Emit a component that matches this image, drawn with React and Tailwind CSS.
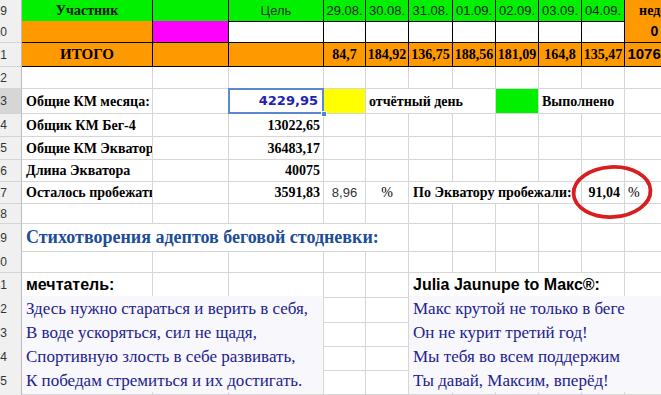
import React from "react";

const COLS =
  "grid grid-cols-[22px_131px_76px_95px_42px_43px_44px_43px_43px_43px_43px_60px]";

const serifB = "font-['Liberation_Serif',serif] font-bold";
const serif = "font-['Liberation_Serif',serif]";
const sans = "font-['Liberation_Sans',Arial,sans-serif]";
const dejaB = "font-['DejaVu_Sans',sans-serif] font-bold";

const dates = ["29.08.", "30.08.", "31.08.", "01.09.", "02.09.", "03.09.", "04.09."];
const totals = ["84,7", "184,92", "136,75", "188,56", "181,09", "164,8", "135,47"];

const summary = [
  { n: "24", h: "h-[23px]", label: "Общик КМ Бег-4", value: "13022,65" },
  { n: "25", h: "h-[23px]", label: "Общие КМ Экватора", value: "36483,17" },
  { n: "26", h: "h-[22px]", label: "Длина Экватора", value: "40075" },
];

const poem = [
  ["Здесь нужно стараться и верить в себя,", "Макс крутой не только в беге"],
  ["В воде ускоряться, сил не щадя,", "Он не курит третий год!"],
  ["Спортивную злость в себе развивать,", "Мы тебя во всем поддержим"],
  ["К победам стремиться и их достигать.", "Ты давай, Максим, вперёд!"],
];

const Row = ({ n, h, active, children }) => (
  <div className={`${COLS} ${h}`}>
    <div
      className={`flex items-center justify-end overflow-hidden border-r border-b border-r-[#bcbcbc] border-b-[#d4d4d4] pr-[14px] text-[12px] text-[#333] ${
        active ? "bg-[#d6d6d6]" : "bg-[#f0f0f0]"
      }`}
    >
      {n}
    </div>
    {children}
  </div>
);

const Cell = ({ dark, className = "", children }) => (
  <div
    className={`flex min-w-0 items-center whitespace-nowrap border-r border-b ${
      dark ? "border-black" : "border-[#d6d6d6]"
    } ${className}`}
  >
    {children}
  </div>
);

const blanks = (count, className = "") =>
  Array.from({ length: count }, (_, i) => <Cell key={`b${i}`} className={className} />);

export default function App() {
  return (
    <div className={`relative h-[395px] w-full overflow-hidden bg-white ${sans}`}>
      <div className="w-[685px]">
        {/* frozen header row */}
        <Row n="19" h="h-[17px]">
          <Cell dark className={`justify-center bg-[#00f000] text-[14px] text-[#111] ${serifB}`}>
            Участник
          </Cell>
          <Cell dark className="bg-[#00f000]" />
          <Cell dark className="justify-center bg-[#00f000] text-[13px] text-[#333]">
            Цель
          </Cell>
          {dates.map((d) => (
            <Cell dark key={d} className="justify-center bg-[#00f000] text-[13px] text-[#222]">
              {d}
            </Cell>
          ))}
          <Cell dark className={`justify-center bg-[#ff9900] pl-[12px] text-[14px] ${serifB}`}>
            неделя
          </Cell>
        </Row>

        <div className="h-[4px] border-b border-black bg-[#d8dde3]" />

        <Row n="20" h="h-[22px]">
          <Cell dark className="bg-[#ff9900]" />
          <Cell dark className="bg-[#ff00ff]" />
          <Cell dark />
          {dates.map((d) => (
            <Cell dark key={d} />
          ))}
          <Cell dark className="justify-center bg-[#ff9900] text-[14px] font-bold">
            0
          </Cell>
        </Row>

        <Row n="21" h="h-[24px]">
          <Cell dark className={`justify-center bg-[#ff9900] text-[15px] ${serifB}`}>
            ИТОГО
          </Cell>
          <Cell dark className="bg-[#ff9900]" />
          <Cell dark className="bg-[#ff9900]" />
          {totals.map((t) => (
            <Cell dark key={t} className={`justify-center bg-[#ff9900] text-[14px] ${serifB}`}>
              {t}
            </Cell>
          ))}
          <Cell dark className="justify-center bg-[#ff9900] text-[15px] font-bold">
            1076,29
          </Cell>
        </Row>

        <Row n="22" h="h-[22px]">{blanks(11)}</Row>

        <Row n="23" h="h-[25px]" active>
          <Cell className={`pl-[4px] text-[14px] ${serifB}`}>Общие КМ месяца:</Cell>
          <Cell />
          <Cell className={`relative justify-end pr-[5px] text-[13px] text-[#2323b0] ${dejaB}`}>
            4229,95
            <div className="absolute inset-[-1px] border-2 border-[#5a89cf]" />
            <div className="absolute right-[-4px] bottom-[-4px] h-[6px] w-[6px] border border-white bg-[#4a86d8]" />
          </Cell>
          <Cell className="bg-[#ffff00]" />
          <Cell className={`col-span-3 pl-[3px] text-[14px] ${serifB}`}>отчётный день</Cell>
          <Cell className="bg-[#00f000]" />
          <Cell className={`col-span-2 pl-[3px] text-[14px] ${serifB}`}>Выполнено</Cell>
          <Cell />
        </Row>

        {summary.map((r) => (
          <Row key={r.n} n={r.n} h={r.h}>
            <Cell className={`overflow-hidden pl-[4px] text-[14px] ${serifB}`}>{r.label}</Cell>
            <Cell />
            <Cell className={`justify-end pr-[3px] text-[14px] ${serifB}`}>{r.value}</Cell>
            {blanks(8)}
          </Row>
        ))}

        <Row n="27" h="h-[22px]">
          <Cell className={`overflow-hidden pl-[4px] text-[14px] ${serifB}`}>Осталось пробежать</Cell>
          <Cell />
          <Cell className={`justify-end pr-[3px] text-[14px] ${serifB}`}>3591,83</Cell>
          <Cell className="justify-center text-[13px] text-[#333]">8,96</Cell>
          <Cell className={`justify-center text-[14px] ${serif}`}>%</Cell>
          <Cell className={`col-span-4 pl-[4px] text-[14px] ${serifB}`}>По Экватору пробежали:</Cell>
          <Cell className={`justify-end pr-[4px] text-[14px] ${serifB}`}>91,04</Cell>
          <Cell className={`pl-[3px] text-[14px] ${serif}`}>%</Cell>
        </Row>

        <Row n="28" h="h-[20px]">{blanks(11)}</Row>

        <Row n="29" h="h-[27px]">
          <Cell className={`col-span-5 pl-[4px] text-[18px] text-[#1d4d97] ${serifB}`}>
            Стихотворения адептов беговой стодневки:
          </Cell>
          {blanks(6)}
        </Row>

        <Row n="30" h="h-[22px]">{blanks(11)}</Row>

        <Row n="31" h="h-[23px]">
          <Cell className="pl-[4px] text-[16px] font-bold text-black">мечтатель:</Cell>
          {blanks(4)}
          <Cell className="col-span-5 pl-[4px] text-[16px] font-bold text-black">
            Julia Jaunupe to Макс®:
          </Cell>
          <Cell />
        </Row>

        {poem.map(([left, right], i) => (
          <Row key={i} n={String(32 + i)} h="h-[24px]">
            <Cell className={`col-span-3 bg-[#f7f7fc] pl-[4px] text-[17px] text-[#22228c] ${serif}`}>
              {left}
            </Cell>
            <Cell />
            <Cell />
            <Cell className={`col-span-6 bg-[#f7f7fc] pl-[4px] text-[17px] text-[#22228c] ${serif}`}>
              {right}
            </Cell>
          </Row>
        ))}

        <Row n="36" h="h-[24px]">{blanks(11)}</Row>
      </div>

      {/* red hand-drawn mark */}
      <svg className="pointer-events-none absolute left-[569px] top-[162px]" width="86" height="60" viewBox="0 0 86 60">
        <ellipse cx="43" cy="30" rx="38.5" ry="25" fill="none" stroke="#d81e1e" strokeWidth="3.8" transform="rotate(-3 43 30)" />
      </svg>
    </div>
  );
}
